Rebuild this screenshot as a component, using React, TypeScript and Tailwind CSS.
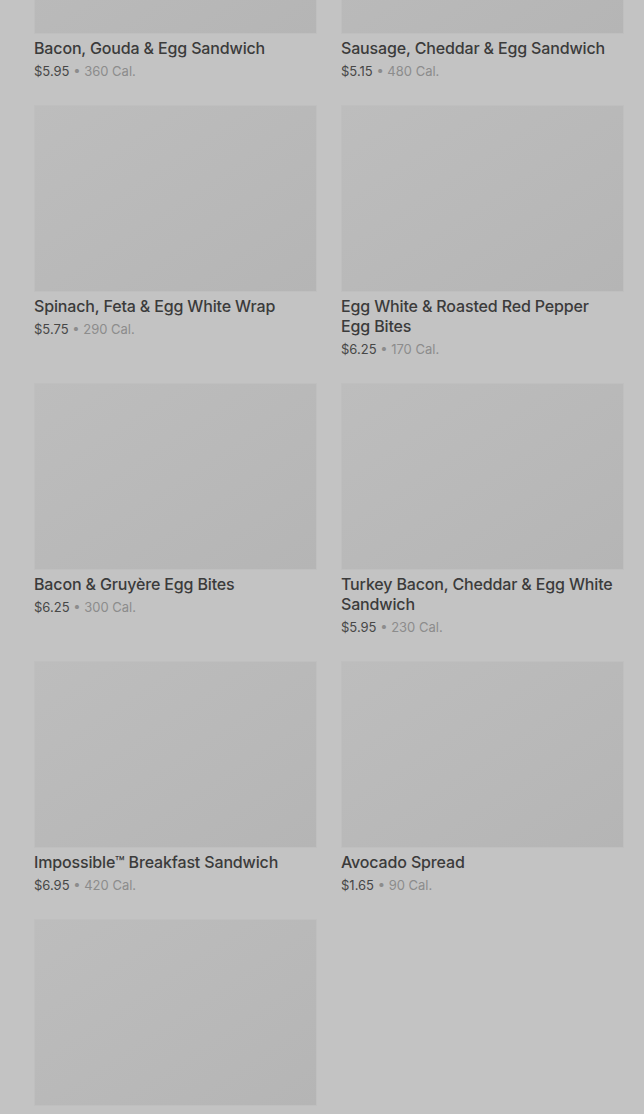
import React from "react";

type Item = { name: string; price: string; cal: string };

const items: Item[] = [
  { name: "Bacon, Gouda & Egg Sandwich", price: "$5.95", cal: "360 Cal." },
  { name: "Sausage, Cheddar & Egg Sandwich", price: "$5.15", cal: "480 Cal." },
  { name: "Spinach, Feta & Egg White Wrap", price: "$5.75", cal: "290 Cal." },
  { name: "Egg White & Roasted Red Pepper Egg Bites", price: "$6.25", cal: "170 Cal." },
  { name: "Bacon & Gruyère Egg Bites", price: "$6.25", cal: "300 Cal." },
  { name: "Turkey Bacon, Cheddar & Egg White Sandwich", price: "$5.95", cal: "230 Cal." },
  { name: "Impossible™ Breakfast Sandwich", price: "$6.95", cal: "420 Cal." },
  { name: "Avocado Spread", price: "$1.65", cal: "90 Cal." },
  { name: "", price: "", cal: "" },
];

function Card({ item }: { item: Item }) {
  return (
    <div className="flex flex-col">
      <div className="h-[187px] w-full border border-[#bfbfbf] bg-gradient-to-br from-[#bdbdbd] to-[#b5b5b5]" />
      {item.name && (
        <div className="pt-[4px]">
          <div className="pr-[6px] text-[16px] leading-[20px] font-medium tracking-[-0.15px] text-[#3b3b3b]">{item.name}</div>
          <div className="mt-[4px] text-[13px] leading-[18px]">
            <span className="text-[#474747]">{item.price}</span>
            <span className="text-[#8c8c8c]"> • {item.cal}</span>
          </div>
        </div>
      )}
    </div>
  );
}

export default function App() {
  return (
    <div
      className="w-[644px] h-[1114px] overflow-hidden bg-[#c3c3c3]"
      style={{ fontFamily: "Inter, 'Noto Sans', sans-serif" }}
    >
      <div className="-mt-[153px] pl-[34px] pr-[20px] grid grid-cols-2 gap-x-[24px] gap-y-[25px]">
        {items.map((it, i) => (
          <Card key={i} item={it} />
        ))}
      </div>
    </div>
  );
}
